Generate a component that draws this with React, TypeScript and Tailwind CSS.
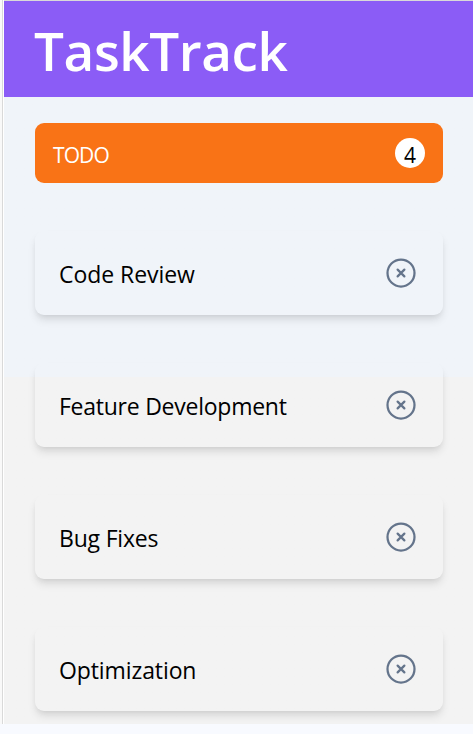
const tasks = [
  { name: "Code Review", tracking: "tracking-[-0.05px]" },
  { name: "Feature Development", tracking: "tracking-[-0.25px]" },
  { name: "Bug Fixes", tracking: "tracking-[-0.2px]" },
  { name: "Optimization", tracking: "tracking-[-0.1px]" },
];

function CloseIcon() {
  return (
    <svg className="size-9" viewBox="0 0 24 24" fill="none" stroke="currentColor" strokeWidth="1.5" strokeLinecap="round" strokeLinejoin="round">
      <path d="m9.75 9.75 4.5 4.5m0-4.5-4.5 4.5M21 12a9 9 0 1 1-18 0 9 9 0 0 1 18 0Z" />
    </svg>
  );
}

export default function App() {
  return (
    <div className="h-[734px] w-[473px] overflow-hidden bg-[#f8faff] font-['Open_Sans','Noto_Sans',sans-serif]">
      <div className="flex h-[724px]">
        <div className="w-1 shrink-0 border-l-2 border-r border-l-[#f9f9f9] border-r-white bg-[#d9d9d9]" />
        <div className="flex-1 border-t border-[#d9d9d9] bg-linear-to-b from-[#f0f4f9] from-[376px] to-[#f3f3f3] to-[376px]">
          <header className="flex h-24 items-center bg-[#8b5cf6] pl-[30px]">
            <h1 className="pt-[3px] text-[53px] leading-[72px] font-semibold tracking-[-0.4px] text-white">TaskTrack</h1>
          </header>
          <main className="pt-[26px] pr-[30px] pl-[31px]">
            <div className="flex h-[60px] items-center justify-between rounded-[9px] bg-[#f97316] pr-[18px] pl-[18px]">
              <h2 className="pt-[3px] text-[21px] leading-[30px] tracking-[-0.9px] text-white">TODO</h2>
              <span className="flex size-[30px] items-center justify-center rounded-full bg-white pt-[3px] text-[21px] leading-[30px] text-black">4</span>
            </div>
            <ul className="mt-12 flex flex-col gap-12">
              {tasks.map((task) => (
                <li
                  key={task.name}
                  className="flex h-[84px] items-center justify-between rounded-[9px] pr-6 pl-6 text-[23px] leading-9 font-normal text-black shadow-[0_6px_9px_-1.5px_rgba(0,0,0,0.1),0_3px_6px_-3px_rgba(0,0,0,0.1)]"
                >
                  <span className={`whitespace-nowrap pt-[2px] ${task.tracking}`}>{task.name}</span>
                  <button className="text-[#64748b]" aria-label="Remove">
                    <CloseIcon />
                  </button>
                </li>
              ))}
            </ul>
          </main>
        </div>
      </div>
    </div>
  );
}
